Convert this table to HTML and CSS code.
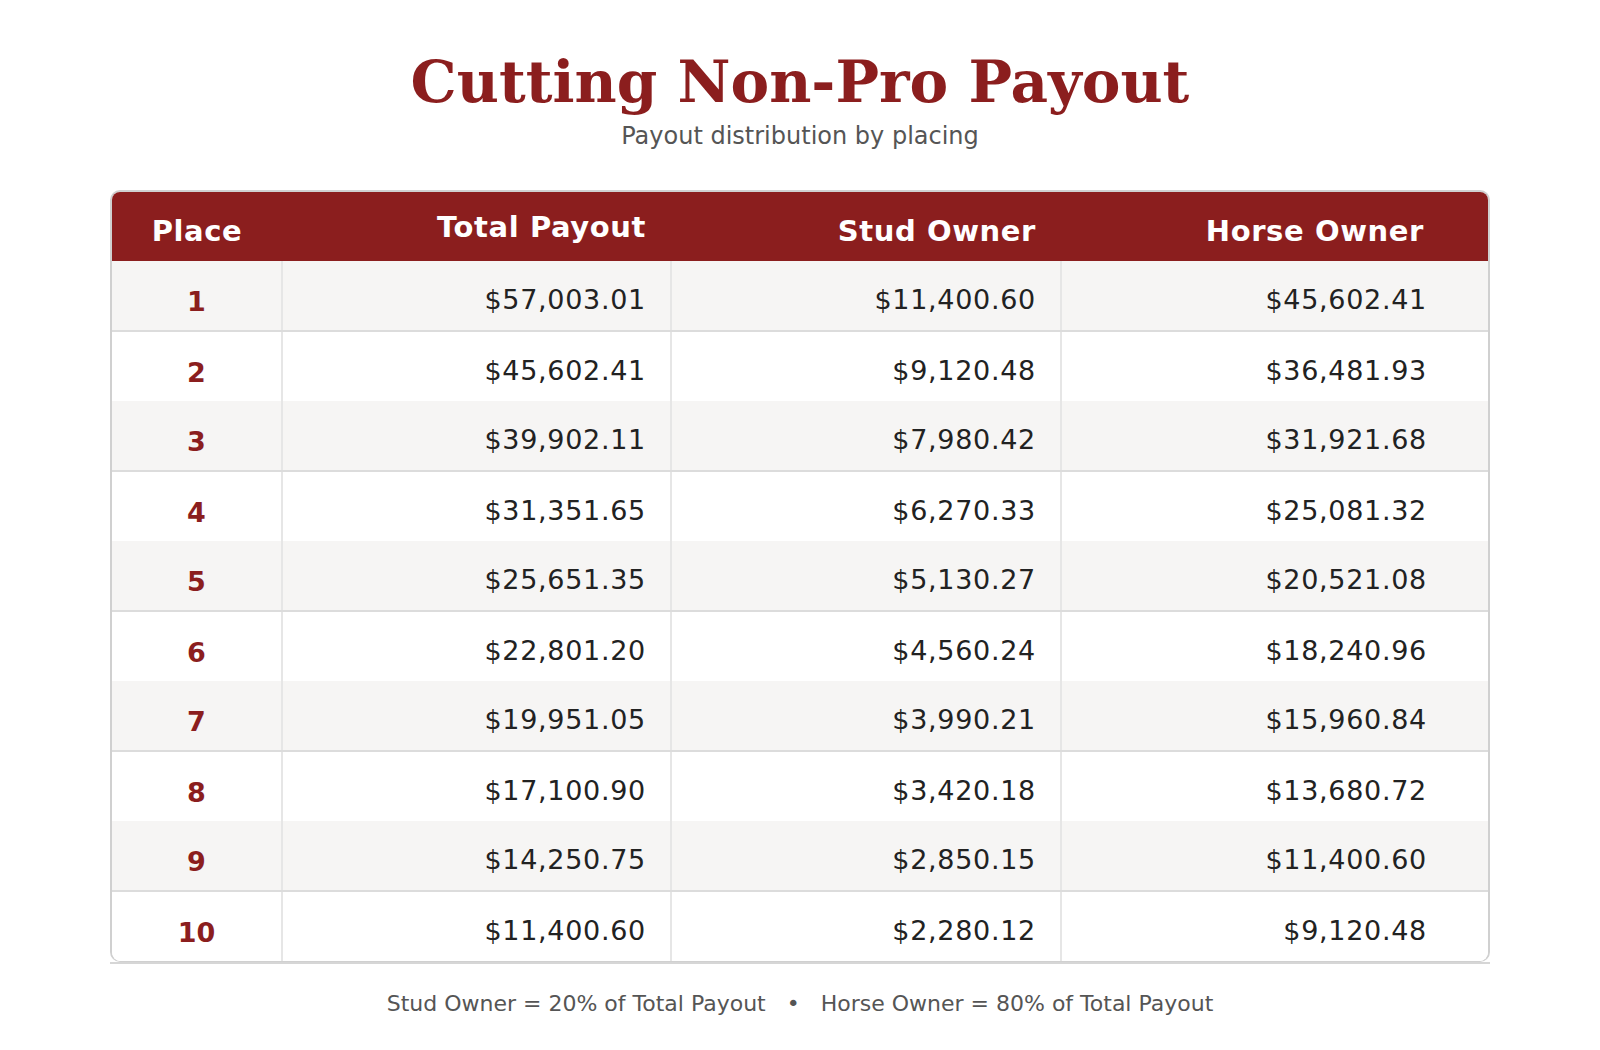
FILE: index.html
```html
<!DOCTYPE html>
<html lang="en">
<head>
<meta charset="utf-8">
<title>Cutting Non-Pro Payout</title>
<link rel="stylesheet" href="styles.css">
</head>
<body>
<main class="page">
  <header class="heading">
    <h1 class="title">Cutting Non-Pro Payout</h1>
    <p class="subtitle">Payout distribution by placing</p>
  </header>
  <div class="table-wrap">
    <div class="card">
      <table class="payout">
        <thead>
          <tr>
            <th class="col-place">Place</th>
            <th class="col-num col-total">Total Payout</th>
            <th class="col-num col-stud">Stud Owner</th>
            <th class="col-num col-last">Horse Owner</th>
          </tr>
        </thead>
        <tbody>
          <tr class="odd"><td class="place">1</td><td class="num">$57,003.01</td><td class="num">$11,400.60</td><td class="num last">$45,602.41</td></tr>
          <tr class="even"><td class="place">2</td><td class="num">$45,602.41</td><td class="num">$9,120.48</td><td class="num last">$36,481.93</td></tr>
          <tr class="odd"><td class="place">3</td><td class="num">$39,902.11</td><td class="num">$7,980.42</td><td class="num last">$31,921.68</td></tr>
          <tr class="even"><td class="place">4</td><td class="num">$31,351.65</td><td class="num">$6,270.33</td><td class="num last">$25,081.32</td></tr>
          <tr class="odd"><td class="place">5</td><td class="num">$25,651.35</td><td class="num">$5,130.27</td><td class="num last">$20,521.08</td></tr>
          <tr class="even"><td class="place">6</td><td class="num">$22,801.20</td><td class="num">$4,560.24</td><td class="num last">$18,240.96</td></tr>
          <tr class="odd"><td class="place">7</td><td class="num">$19,951.05</td><td class="num">$3,990.21</td><td class="num last">$15,960.84</td></tr>
          <tr class="even"><td class="place">8</td><td class="num">$17,100.90</td><td class="num">$3,420.18</td><td class="num last">$13,680.72</td></tr>
          <tr class="odd"><td class="place">9</td><td class="num">$14,250.75</td><td class="num">$2,850.15</td><td class="num last">$11,400.60</td></tr>
          <tr class="even"><td class="place">10</td><td class="num">$11,400.60</td><td class="num">$2,280.12</td><td class="num last">$9,120.48</td></tr>
        </tbody>
      </table>
    </div>
  </div>
  <p class="footnote">Stud Owner = 20% of Total Payout <span class="dot">•</span> Horse Owner = 80% of Total Payout</p>
</main>
</body>
</html>
```
FILE: styles.css
```css
html, body {
  margin: 0;
  padding: 0;
  background: #ffffff;
}

body {
  font-family: "DejaVu Sans", "Liberation Sans", sans-serif;
  color: #222222;
}

.page {
  width: 1380px;
  margin: 0 auto;
  padding-top: 46px;
}

.heading {
  text-align: center;
}

.title {
  margin: 0;
  font-family: "DejaVu Serif", "Liberation Serif", serif;
  font-weight: 700;
  font-size: 58px;
  line-height: 72px;
  color: #8b1e1e;
}

.subtitle {
  margin: 0;
  font-size: 24px;
  line-height: 36px;
  color: #555555;
}

.table-wrap {
  margin-top: 36px;
  border-bottom: 2px solid #d6d6d6;
}

.card {
  border: 2px solid #d0d0d0;
  border-bottom-width: 1px;
  border-radius: 10px;
  overflow: hidden;
}

.payout {
  width: 100%;
  border-collapse: collapse;
  table-layout: fixed;
}

.payout thead tr {
  background: #8b1e1e;
}

.payout th {
  height: 69px;
  padding: 8px 25px 0 25px;
  box-sizing: border-box;
  color: #ffffff;
  font-size: 29px;
  font-weight: 700;
  letter-spacing: 0.6px;
  text-align: right;
  vertical-align: middle;
}

.payout th.col-place {
  width: 170px;
  text-align: center;
  padding: 8px 0 0 0;
}

.payout th.col-total {
  width: 389px;
  padding-top: 0;
}

.payout th.col-stud {
  width: 390px;
}

.payout th.col-last {
  padding-right: 64px;
}

.payout td {
  height: 70px;
  box-sizing: border-box;
  padding: 8px 24px 0 24px;
  font-size: 27px;
  text-align: right;
  vertical-align: middle;
  border-left: 2px solid #e6e6e6;
  color: #222222;
  letter-spacing: 0.7px;
}

.payout td.place {
  border-left: none;
  text-align: center;
  padding: 12px 0 0 0;
  font-weight: 700;
  color: #8b1e1e;
  letter-spacing: 0;
}

.payout td.last {
  padding-right: 61px;
}

.payout tr.odd td {
  background: #f6f5f4;
  border-bottom: 2px solid #dcdcdc;
}

.payout tr.even td {
  background: #ffffff;
}

.footnote {
  margin: 25px 0 0 0;
  text-align: center;
  font-size: 22px;
  line-height: 30px;
  color: #555555;
}

.dot {
  margin: 0 14px;
}
```
